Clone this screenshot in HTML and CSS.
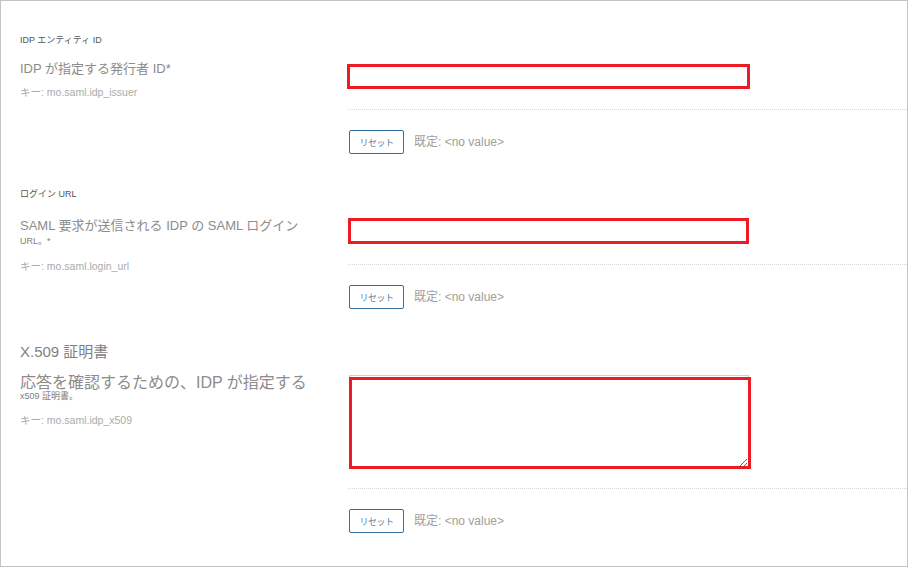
FILE: index.html
```html
<!DOCTYPE html>
<html lang="ja">
<head>
<meta charset="utf-8">
<title>SAML 設定</title>
<link rel="stylesheet" href="styles.css">
</head>
<body>
<div class="page">
  <section class="sec sec-1">
    <div class="sec-title">IDP エンティティ ID</div>
    <div class="field">
      <div class="label-col">
        <div class="label">IDP が指定する発行者 ID*</div>
        <div class="key">キー: mo.saml.idp_issuer</div>
      </div>
      <div class="control-col">
        <input class="text-input in-1" type="text">
        <div class="sep"></div>
        <div class="reset-row">
          <button class="reset-btn" type="button">リセット</button>
          <span class="default">既定: &lt;no value&gt;</span>
        </div>
      </div>
    </div>
  </section>

  <section class="sec sec-2">
    <div class="sec-title">ログイン URL</div>
    <div class="field">
      <div class="label-col">
        <div class="label">SAML 要求が送信される IDP の SAML ログイン</div>
        <div class="label-sub">URL。*</div>
        <div class="key key-2">キー: mo.saml.login_url</div>
      </div>
      <div class="control-col">
        <input class="text-input in-2" type="text">
        <div class="sep"></div>
        <div class="reset-row">
          <button class="reset-btn" type="button">リセット</button>
          <span class="default">既定: &lt;no value&gt;</span>
        </div>
      </div>
    </div>
  </section>

  <section class="sec sec-3">
    <div class="sec-title big">X.509 証明書</div>
    <div class="field field-3">
      <div class="label-col">
        <div class="label label-big">応答を確認するための、IDP が指定する</div>
        <div class="label-sub">x509 証明書。</div>
        <div class="key key-3">キー: mo.saml.idp_x509</div>
      </div>
      <div class="control-col">
        <div class="ta-wrap">
          <textarea class="ta"></textarea>
          <span class="caret"></span>
          <span class="mark"></span>
        </div>
        <div class="sep"></div>
        <div class="reset-row">
          <button class="reset-btn" type="button">リセット</button>
          <span class="default">既定: &lt;no value&gt;</span>
        </div>
      </div>
    </div>
  </section>
</div>
</body>
</html>
```

FILE: styles.css
```css
* { box-sizing: border-box; }
html, body {
  margin: 0;
  padding: 0;
  background: #ffffff;
}
body {
  font-family: "Liberation Sans", "Noto Sans CJK JP", sans-serif;
}
.page {
  width: 908px;
  height: 567px;
  border: 1px solid #c4c4c4;
  padding-left: 19px;
  overflow: hidden;
}
.sec-title {
  font-size: 9px;
  line-height: 14px;
  color: #555;
  margin-top: 33px;
}
.sec-1 .sec-title { margin-top: 32px; }
.sec-title.big {
  font-size: 15px;
  line-height: 20px;
  color: #808080;
}
.field {
  display: grid;
  grid-template-columns: 328px 1fr;
  margin-top: 13px;
}
.sec-2 .field { margin-top: 16px; }
.sec-3 .field { margin-top: 11px; }
.label {
  font-size: 13px;
  line-height: 18px;
  color: #8c8c8c;
  white-space: nowrap;
}
.label-big {
  font-size: 16px;
  line-height: 16px;
  margin-top: 2px;
}
.label-sub {
  font-size: 9px;
  line-height: 12px;
  color: #808080;
}
.sec-3 .label-sub { line-height: 10px; }
.key {
  font-size: 10.5px;
  line-height: 14px;
  color: #ababab;
  margin-top: 7px;
}
.key-2 { margin-top: 12px; }
.key-3 { margin-top: 12px; }
.control-col {
  display: flex;
  flex-direction: column;
}
.text-input {
  display: block;
  width: 403px;
  height: 25px;
  border: 3px solid #ed1c24;
  background: #fff;
  margin: 4px 0 0 -1px;
  padding: 0;
  outline: none;
}
.in-2 {
  margin: 1px 0 0 0;
  width: 401px;
  height: 26px;
}
.sep {
  border-top: 1px dotted #d6d6d6;
  margin-top: 20px;
  height: 0;
}
.reset-row {
  display: flex;
  align-items: center;
  gap: 10px;
  margin-top: 20px;
  margin-left: 1px;
}
.reset-btn {
  width: 55px;
  height: 24px;
  border: 1px solid #336f9d;
  border-radius: 2px;
  background: #fff;
  color: #5b7fa6;
  font-family: "Noto Sans CJK JP", sans-serif;
  font-size: 9px;
  padding: 0;
  letter-spacing: -0.5px;
}
.default {
  font-size: 12px;
  color: #9e9e9e;
  margin-bottom: 4px;
}
.ta-wrap {
  position: relative;
  margin-top: 2px;
  margin-left: 1px;
  width: 400px;
  height: 94px;
}
.ta {
  display: block;
  width: 400px;
  height: 93px;
  border: 1px solid #cfcfcf;
  background: #fff;
  resize: both;
  outline: none;
  margin: 0;
}
.caret {
  position: absolute;
  left: 2px;
  top: 25px;
  width: 1px;
  height: 12px;
  background: #c8c8c8;
}
.mark {
  position: absolute;
  left: 0;
  top: 2px;
  width: 402px;
  height: 92px;
  border: 3px solid #ed1c24;
  pointer-events: none;
}
.sec-3 .sep { margin-top: 19px; }
```
